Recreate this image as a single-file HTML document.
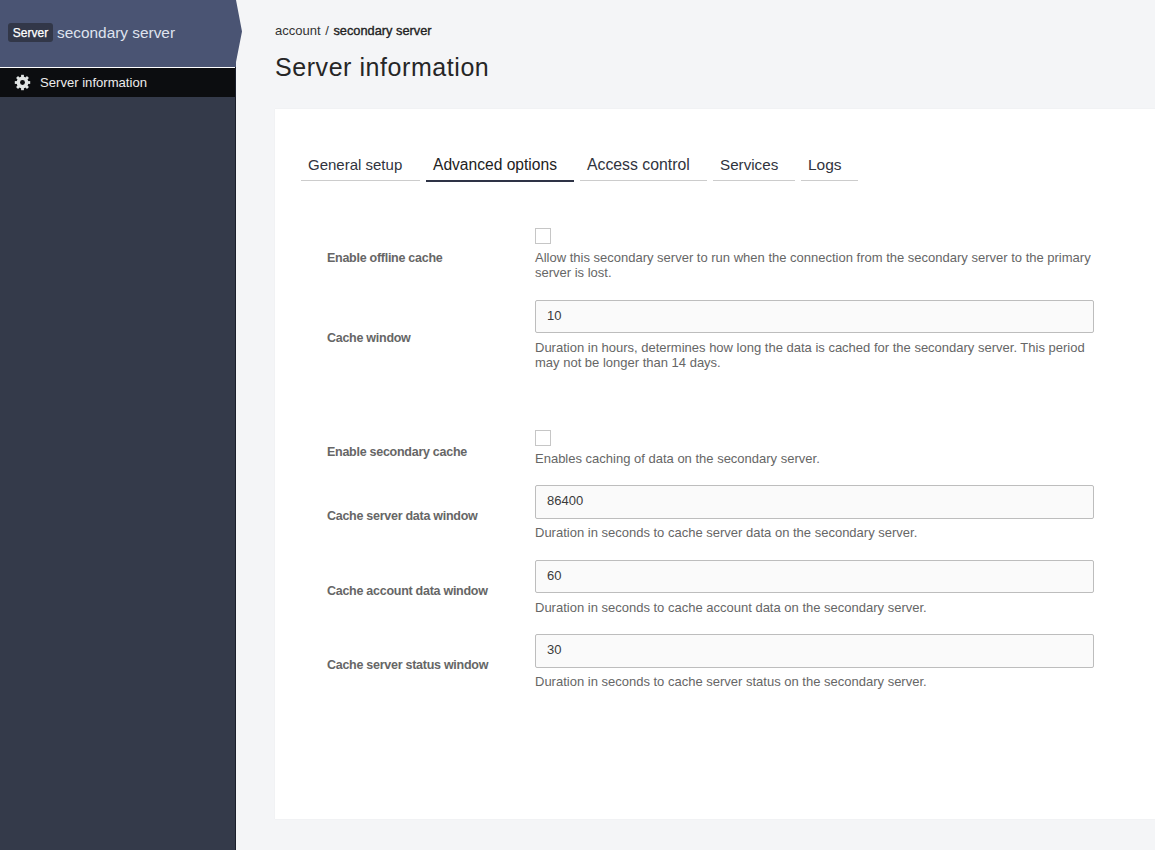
<!DOCTYPE html>
<html><head><meta charset="utf-8">
<style>
*{box-sizing:border-box;margin:0;padding:0}
html,body{width:1155px;height:850px;overflow:hidden;background:#f4f5f7;font-family:"Liberation Sans",sans-serif}
.sb{position:absolute;left:0;top:0;width:236px;height:850px;background:#343a4a;border-right:1px solid #1b1f2b}
.hdr{position:absolute;left:0;top:0;width:243px;height:67px}
.badge{position:absolute;left:8px;top:23px;width:45px;height:19px;background:#323748;border-radius:3px;color:#fff;font-size:12px;line-height:19px;text-align:center}
.sname{position:absolute;left:57px;top:22.5px;color:#dfe3ee;font-size:15.4px;line-height:20px}
.wline{position:absolute;left:0;top:67px;width:235px;height:1px;background:#fff}
.menu{position:absolute;left:0;top:68px;width:235px;height:29px;background:#0c0d10}
.gear{position:absolute;left:10px;top:70px}
.mtext{position:absolute;left:40px;top:75px;color:#ececec;font-size:13.1px;line-height:16px}
.bc{position:absolute;left:275px;top:23px;font-size:13px;color:#333;line-height:16px}
.bc b{font-weight:normal;font-size:12.8px;-webkit-text-stroke:0.35px #222;color:#222}
.title{position:absolute;left:275px;top:52px;font-size:25px;letter-spacing:0.56px;color:#262626;line-height:30px}
.card{position:absolute;left:275px;top:109px;width:900px;height:710px;background:#fff;box-shadow:0 0 1px rgba(0,0,0,.08)}
.tab{position:absolute;top:156px;font-size:15.5px;color:#30333d;line-height:18px;height:25px;border-bottom:1px solid #ccc;padding-left:7px}
.tab.act{border-bottom:2px solid #2e3346;color:#222;height:26px}
.lbl{position:absolute;left:327px;font-size:12.5px;letter-spacing:-0.27px;font-weight:bold;color:#666;line-height:16px}
.cb{position:absolute;left:535px;width:16px;height:16px;border:1px solid #c6c6c6;background:#fff}
.help{position:absolute;left:535px;width:559px;font-size:13px;color:#666;line-height:15px}
.inp{position:absolute;left:535px;width:559px;height:33px;border:1px solid #bdbdbd;border-radius:2px;background:#fafafa;font-size:13px;color:#3a3a3a;padding-left:11px;line-height:29px}
</style></head><body>
<div class="sb"></div>
<svg class="hdr" width="243" height="67" viewBox="0 0 243 67"><polygon points="0,0 236,0 242,31.5 236,62 236,67 0,67" fill="#4a5473"/></svg>
<div class="badge"><span style="position:relative;top:1px;-webkit-text-stroke:0.25px #fff">Server</span></div>
<div class="sname">secondary server</div>
<div class="wline"></div>
<div class="menu"></div>
<svg class="gear" width="26" height="26" viewBox="0 0 26 26"><g transform="translate(12.5 12.5)" fill="#e2e5e5"><circle r="5.9"/><rect x="-1.4" y="-7.7" width="2.8" height="4" transform="rotate(0)"/><rect x="-1.4" y="-7.7" width="2.8" height="4" transform="rotate(45)"/><rect x="-1.4" y="-7.7" width="2.8" height="4" transform="rotate(90)"/><rect x="-1.4" y="-7.7" width="2.8" height="4" transform="rotate(135)"/><rect x="-1.4" y="-7.7" width="2.8" height="4" transform="rotate(180)"/><rect x="-1.4" y="-7.7" width="2.8" height="4" transform="rotate(225)"/><rect x="-1.4" y="-7.7" width="2.8" height="4" transform="rotate(270)"/><rect x="-1.4" y="-7.7" width="2.8" height="4" transform="rotate(315)"/><circle r="2.45" fill="#0c0d10"/></g></svg>
<div class="mtext">Server information</div>

<div class="bc">account <span style="margin:0 1px">/</span> <b>secondary server</b></div>
<div class="title">Server information</div>
<div class="card"></div>

<div class="tab" style="left:301px;width:119px;font-size:15px">General setup</div>
<div class="tab act" style="left:426px;width:148px;font-size:15.6px">Advanced options</div>
<div class="tab" style="left:580px;width:127px;font-size:15.8px">Access control</div>
<div class="tab" style="left:713px;width:82px;font-size:15.2px">Services</div>
<div class="tab" style="left:801px;width:57px">Logs</div>

<div class="lbl" style="top:250px">Enable offline cache</div>
<div class="cb" style="top:228px"></div>
<div class="help" style="top:250px">Allow this secondary server to run when the connection from the secondary server to the primary server is lost.</div>

<div class="lbl" style="top:329.5px">Cache window</div>
<div class="inp" style="top:300px">10</div>
<div class="help" style="top:340px">Duration in hours, determines how long the data is cached for the secondary server. This period may not be longer than 14 days.</div>

<div class="lbl" style="top:444px">Enable secondary cache</div>
<div class="cb" style="top:430px"></div>
<div class="help" style="top:451px">Enables caching of data on the secondary server.</div>

<div class="lbl" style="top:508px">Cache server data window</div>
<div class="inp" style="top:485px;height:34px">86400</div>
<div class="help" style="top:525px">Duration in seconds to cache server data on the secondary server.</div>

<div class="lbl" style="top:583px">Cache account data window</div>
<div class="inp" style="top:560px">60</div>
<div class="help" style="top:600px">Duration in seconds to cache account data on the secondary server.</div>

<div class="lbl" style="top:657px">Cache server status window</div>
<div class="inp" style="top:634px;height:34px">30</div>
<div class="help" style="top:674px">Duration in seconds to cache server status on the secondary server.</div>
</body></html>
